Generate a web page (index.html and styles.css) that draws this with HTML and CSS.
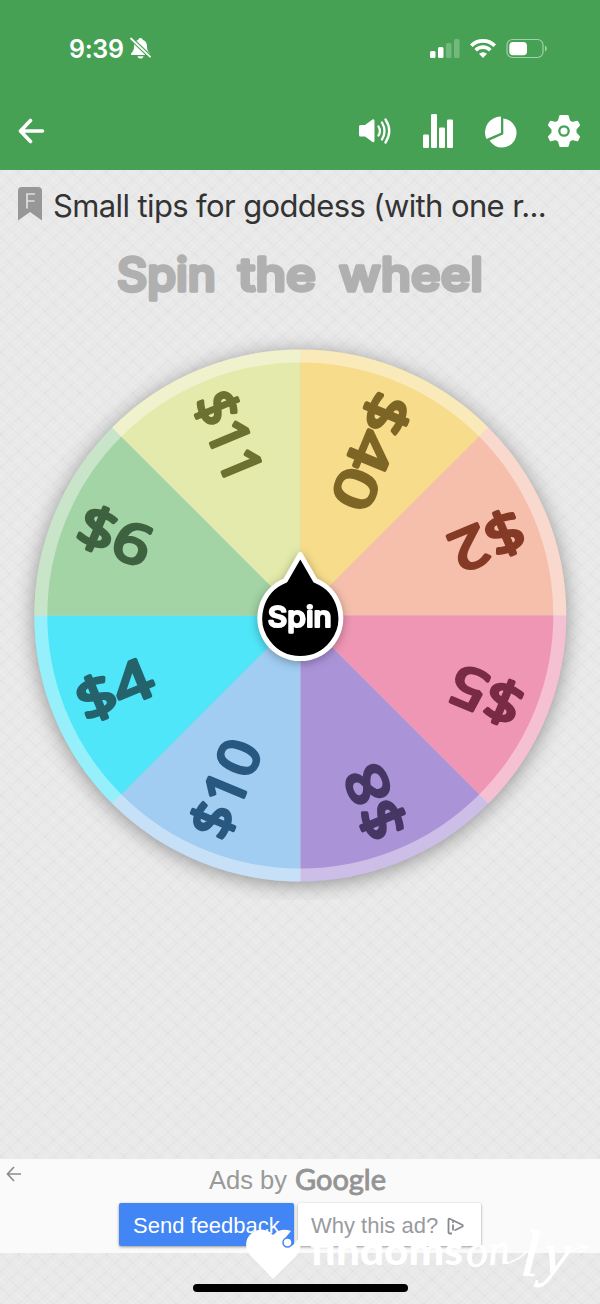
FILE: index.html
```html
<!DOCTYPE html>
<html lang="en">
<head>
  <meta charset="UTF-8">
  <title>Spin the wheel</title>
  <link rel="stylesheet" href="styles.css">
</head>
<body>
  <div class="app">
    <header class="header">
      <div class="status">
        <span class="time">9:39</span>
        <svg class="bell" width="21" height="23" viewBox="0 0 21 23">
          <path d="M10.500 1c-1.300 0-2 .8-2.200 1.700C5.500 3.600 4 6 4 9.200c0 3.500-.8 5-2.600 6.800-.9 1-.4 2 .8 2h16.600c1.200 0 1.700-1 .8-2-1.800-1.800-2.600-3.300-2.600-6.800 0-3.200-1.500-5.600-4.300-6.500C12.500 1.800 11.800 1 10.500 1z" fill="#fff"/>
          <path d="M7.500 19.300h6c-.3 1.500-1.500 2.300-3 2.300s-2.700-.8-3-2.300z" fill="#fff"/>
          <path d="M0 .5l20.500 19.500" stroke="#46a154" stroke-width="4"/>
          <path d="M1 1.500l19 18.200" stroke="#fff" stroke-width="1.800" stroke-linecap="round"/>
        </svg>
        <svg class="signals" width="120" height="22" viewBox="0 0 120 22">
          <g fill="#fff">
            <rect x="0" y="13" width="5.500" height="7" rx="1.500"/>
            <rect x="8" y="9" width="5.500" height="11" rx="1.500"/>
            <rect x="16" y="5" width="5.500" height="15" rx="1.500" opacity=".25"/>
            <rect x="24" y="1" width="5.500" height="19" rx="1.500" opacity=".25"/>
          </g>
          <g fill="none" stroke="#fff" stroke-width="3.700">
            <path d="M41.300 7.800a16.500 16.500 0 0 1 23.400 0"/>
            <path d="M45.700 12.200a10.400 10.400 0 0 1 14.600 0"/>
          </g>
          <path d="M53 20l-4-4.200a5.800 5.800 0 0 1 8 0z" fill="#fff"/>
          <rect x="77" y="1.500" width="36" height="18" rx="5.500" fill="none" stroke="#fff" stroke-width="1.200" opacity=".5"/>
          <rect x="79.300" y="4" width="17.700" height="13.200" rx="3.800" fill="#fff"/>
          <path d="M115 7.500c2.400.8 2.400 5.200 0 6z" fill="#fff" opacity=".5"/>
        </svg>
      </div>
      <nav class="toolbar">
        <svg class="back" width="27" height="26" viewBox="0 0 27 26">
          <path d="M12.500 2.500L2.500 13l10 10.500M3 13H24.500" fill="none" stroke="#fff" stroke-width="3.600" stroke-linecap="round" stroke-linejoin="round"/>
        </svg>
        <svg width="34" height="28" viewBox="0 0 34 28">
          <path d="M1 9.500q0-1.500 1.500-1.500H7L14.500 2.500Q16.500 1.500 16.500 4V23.500q0 2.500-2 1.500L7 19.500H2.500Q1 19.500 1 18z" fill="#fff"/>
          <path d="M20.500 9.500q2.800 4.500 0 9M24 5.500q5 8.500 0 17M27.500 2.500q7.500 11.500 0 23" fill="none" stroke="#fff" stroke-width="2.300" stroke-linecap="round"/>
        </svg>
        <svg width="30" height="36" viewBox="0 0 30 36">
          <g fill="#fff">
            <rect x="0" y="21.500" width="6" height="13.500" rx="1.300"/>
            <rect x="8" y="1" width="6" height="34" rx="1.300"/>
            <rect x="16" y="14.500" width="6" height="20.500" rx="1.300"/>
            <rect x="24" y="6.500" width="6" height="28.500" rx="1.300"/>
          </g>
        </svg>
        <svg width="33" height="33" viewBox="0 0 33 33">
          <path d="M17 1.500v16.300L2.500 24A15.800 15.800 0 0 1 17 1.500z" fill="#fff"/>
          <path d="M19.300 3.600A14.500 14.500 0 1 1 5.600 25.500L19.300 19.300z" fill="#fff"/>
        </svg>
        <svg width="34" height="34" viewBox="0 0 34 34">
          <path d="M13.300 2h7.400l1.500 5.200 3.100 1.800 5-1.300 1.700 3.300-3.500 4.200v3.600l3.500 4.200-1.700 3.300-5-1.300-3.100 1.800-1.500 5.200h-7.400l-1.500-5.200-3.100-1.800-5 1.300L2 23l3.500-4.200v-3.600L2 11l1.700-3.300 5 1.300 3.100-1.800z" fill="#fff" stroke="#fff" stroke-width="2" stroke-linejoin="round"/>
          <circle cx="17" cy="17" r="4.700" fill="#fff" stroke="#46a154" stroke-width="2.300"/>
        </svg>
      </nav>
    </header>

    <main class="main">
      <div class="list-name">
        <svg width="24" height="34" viewBox="0 0 24 34">
          <path d="M0 4q0-4 4-4h16q4 0 4 4v29.500L12 25 0 33.500z" fill="#979797"/>
          <path d="M17 7H9v14.500M9 14h7.500" fill="none" stroke="#e0e0e0" stroke-width="1.700"/>
        </svg>
        <span class="name">Small tips for goddess (with one r...</span>
      </div>

      <svg class="title" width="380" height="70" viewBox="0 0 380 70">
        <text x="7" y="41.500" textLength="99" lengthAdjust="spacingAndGlyphs">Spin</text>
        <text x="128" y="41.500" textLength="78" lengthAdjust="spacingAndGlyphs">the</text>
        <text x="229" y="41.500" textLength="144" lengthAdjust="spacingAndGlyphs">wheel</text>
      </svg>

      <svg class="wheel" width="600" height="570" viewBox="-300.300 -285.500 600 570">
        <circle class="wheel-shadow" r="266"/>
        <g id="slices"></g>
        <circle r="259.500" fill="none" stroke="#fff" stroke-opacity=".4" stroke-width="13"/>
        <g id="labels" class="labels"></g>
        <g class="hub">
          <path d="M-15 -35L0 -61 15 -35A40.500 40.500 0 1 1 -15 -35z" fill="#000" stroke="#fff" stroke-width="5" stroke-linejoin="round"/>
          <text x="-32.500" y="11" textLength="64" lengthAdjust="spacingAndGlyphs">Spin</text>
        </g>
      </svg>
    </main>

    <section class="ad">
      <svg class="ad-back" width="16" height="16" viewBox="0 0 16 16">
        <path d="M8 1L1.500 8 8 15M2 8h13" fill="none" stroke="#8c8c8c" stroke-width="1.700"/>
      </svg>
      <div class="ad-by">
        <span>Ads by</span>
        <svg width="92" height="34" viewBox="0 0 92 34">
          <text x="0" y="25" textLength="91" lengthAdjust="spacingAndGlyphs">Google</text>
        </svg>
      </div>
      <div class="ad-buttons">
        <button class="btn btn-blue">Send feedback</button>
        <button class="btn btn-white">Why this ad?
          <svg width="18" height="18" viewBox="0 0 18 18">
            <path d="M5 16.500H3q-1.500 0-1.500-1.500V3q0-2 1.700-1L15 7.800q1.700 1 0 2L7.500 13.500M6 7.500v6" fill="none" stroke="#8a8a8e" stroke-width="1.800"/>
            <circle cx="6" cy="5" r="1" fill="#8a8a8e"/>
          </svg>
        </button>
      </div>
    </section>

    <footer class="footer">
      <div class="home-bar"></div>
    </footer>

    <svg class="watermark" width="360" height="90" viewBox="240 1214 360 90">
      <path d="M273 1279L250 1255C243 1247 246 1235 255 1231C263 1228 270 1231 273 1235C279 1229 285 1229 291 1231L286 1237C281 1243 290 1250 295 1243L299 1238C302 1246 300 1251 296 1256z"/>
      <circle cx="287.500" cy="1242.500" r="4.500" stroke="#4285f4" stroke-width="1.500"/>
      <text class="mark-bold" x="310" y="1264.500" textLength="153" lengthAdjust="spacingAndGlyphs">findoms</text>
      <g class="mark-script">
        <text transform="translate(467 1267) rotate(-5)" font-size="44">o</text>
        <text transform="translate(489 1265) rotate(-5)" font-size="44">n</text>
        <text transform="translate(520 1275) rotate(4)" font-size="66">l</text>
        <text transform="translate(541 1274) skewX(-8)" font-size="60">y</text>
      </g>
      <path class="mark-tail" d="M510 1262Q519 1260 527 1251M567 1254Q578 1246 587 1248M578 1245l10 2-9 6"/>
    </svg>
  </div>

  <script src="wheel.js"></script>
</body>
</html>
```

FILE: styles.css
```css
* {
  box-sizing: border-box;
}
body {
  margin: 0;
  font-family: "Liberation Sans", Arial, sans-serif;
}
svg {
  display: block;
  flex: none;
}
.app {
  position: relative;
  display: flex;
  flex-direction: column;
  width: 600px;
  height: 1304px;
  overflow: hidden;
  background-color: #e9e9e9;
  background-image:
    repeating-linear-gradient(43deg, rgba(0,0,0,0.022) 0 1px, transparent 1px 6px, rgba(255,255,255,0.12) 6px 7px, transparent 7px 12px),
    repeating-linear-gradient(-43deg, rgba(0,0,0,0.022) 0 1px, transparent 1px 6px, rgba(255,255,255,0.12) 6px 7px, transparent 7px 12px);
}

/* header */
.header {
  height: 170px;
  background: #46a154;
}
.status {
  display: flex;
  height: 93px;
  padding: 37px 50px 0 69px;
}
.time {
  width: 61px;
  color: #fff;
  font: 600 25px/24px Inter, sans-serif;
  letter-spacing: -0.3px;
}
.signals {
  margin: 1px 0 0 auto;
}
.toolbar {
  display: flex;
  align-items: center;
  gap: 31px;
  height: 76px;
  padding: 0 19px 0 18px;
}
.toolbar svg:nth-child(3),
.toolbar svg:nth-child(4) {
  margin-right: -0.5px;
}
.back {
  margin-right: auto;
}

/* content */
.main {
  height: 989px;
  padding-top: 17px;
}
.list-name {
  display: flex;
  gap: 11px;
  height: 60px;
  padding-left: 18px;
}
.name {
  color: #333;
  font: 400 31px/38px Inter, sans-serif;
  letter-spacing: -0.62px;
  white-space: nowrap;
}
.title {
  margin: 2px 0 0 110px;
}
.title text {
  font: 500 46px Inter, sans-serif;
  fill: #b0b0b0;
  stroke: #b0b0b0;
  stroke-width: 3.6px;
  stroke-linejoin: round;
}
.wheel {
  margin-top: 11px;
}
.wheel-shadow {
  fill: #ccc;
  filter: drop-shadow(0 3px 10px rgba(0,0,0,0.38));
}
.labels text {
  font: 500 55px "Open Sans", sans-serif;
  stroke-width: 3.6px;
  stroke-linejoin: round;
}
.hub {
  filter: drop-shadow(0 2px 5px rgba(0,0,0,0.3));
}
.hub text {
  font: 500 29px Inter, sans-serif;
  fill: #fff;
  stroke: #fff;
  stroke-width: 2.2px;
  stroke-linejoin: round;
}

/* ad */
.ad {
  display: grid;
  grid-template-columns: 119px 1fr;
  grid-template-rows: 44px 50px;
  height: 94px;
  background: #fafafa;
}
.ad-back {
  margin: 7px 0 0 6px;
}
.ad-by {
  display: flex;
  gap: 8px;
  padding: 6px 0 0 90px;
  color: #999;
  font-size: 25.5px;
  line-height: 31px;
}
.ad-by text {
  font: 400 29px Lato, sans-serif;
  fill: #949494;
  stroke: #949494;
  stroke-width: 0.9px;
}
.ad-buttons {
  grid-column: 2;
  display: flex;
  gap: 4px;
}
.btn {
  display: flex;
  align-items: center;
  gap: 9px;
  height: 43px;
  padding: 2px 13px 0;
  border: 0;
  border-radius: 2px;
  font: 22px "Liberation Sans", Arial, sans-serif;
  white-space: nowrap;
  box-shadow: 0 1px 3px rgba(0,0,0,0.4);
}
.btn-blue {
  width: 175px;
  padding-left: 14px;
  background: #4285f4;
  color: #fff;
}
.btn-white {
  width: 183px;
  background: #fff;
  color: #9a9aa0;
}

/* bottom */
.footer {
  display: flex;
  justify-content: center;
  padding-top: 31px;
}
.home-bar {
  width: 215px;
  height: 8px;
  border-radius: 4px;
  background: #000;
}
.watermark {
  position: absolute;
  right: 0;
  bottom: 0;
  fill: #fff;
}
.mark-bold {
  font: 900 39px Lato, sans-serif;
}
.mark-script {
  font-family: "Liberation Serif", serif;
  font-style: italic;
  stroke: #fff;
  stroke-width: 0.8px;
}
.mark-tail {
  fill: none;
  stroke: #fff;
  stroke-width: 1.5px;
}
```

FILE: wheel.js
```js
// clockwise, starting from the top
const slices = [
  { label: '$40', color: '#f7dc8b', text: '#7d6525', size: 121 },
  { label: '$2', color: '#f6bfac', text: '#853a25', size: 76 },
  { label: '$5', color: '#ef96b4', text: '#792b45', size: 74 },
  { label: '$8', color: '#ab93d8', text: '#463663', size: 76 },
  { label: '$10', color: '#a1cdf2', text: '#28587f', size: 101 },
  { label: '$4', color: '#50e6f9', text: '#24636b', size: 78 },
  { label: '$6', color: '#a3d4a5', text: '#3e6140', size: 75 },
  { label: '$11', color: '#e4eaab', text: '#6c7131', size: 93 }
];

const radius = 266;
let paths = '';
let labels = '';

slices.forEach((slice, i) => {
  const a = (i * 45 - 90) * Math.PI / 180;
  const b = a + Math.PI / 4;
  const x1 = radius * Math.cos(a), y1 = radius * Math.sin(a);
  const x2 = radius * Math.cos(b), y2 = radius * Math.sin(b);
  paths += `<path d="M0 0L${x1} ${y1}A${radius} ${radius} 0 0 1 ${x2} ${y2}z" fill="${slice.color}"/>`;

  // labels read from the rim towards the hub
  const angle = i * 45 + 22.5 + 90;
  labels += `<text x="-239" y="17" transform="rotate(${angle})" textLength="${slice.size}" lengthAdjust="spacingAndGlyphs" fill="${slice.text}" stroke="${slice.text}">${slice.label}</text>`;
});

document.getElementById('slices').innerHTML = paths;
document.getElementById('labels').innerHTML = labels;
```
